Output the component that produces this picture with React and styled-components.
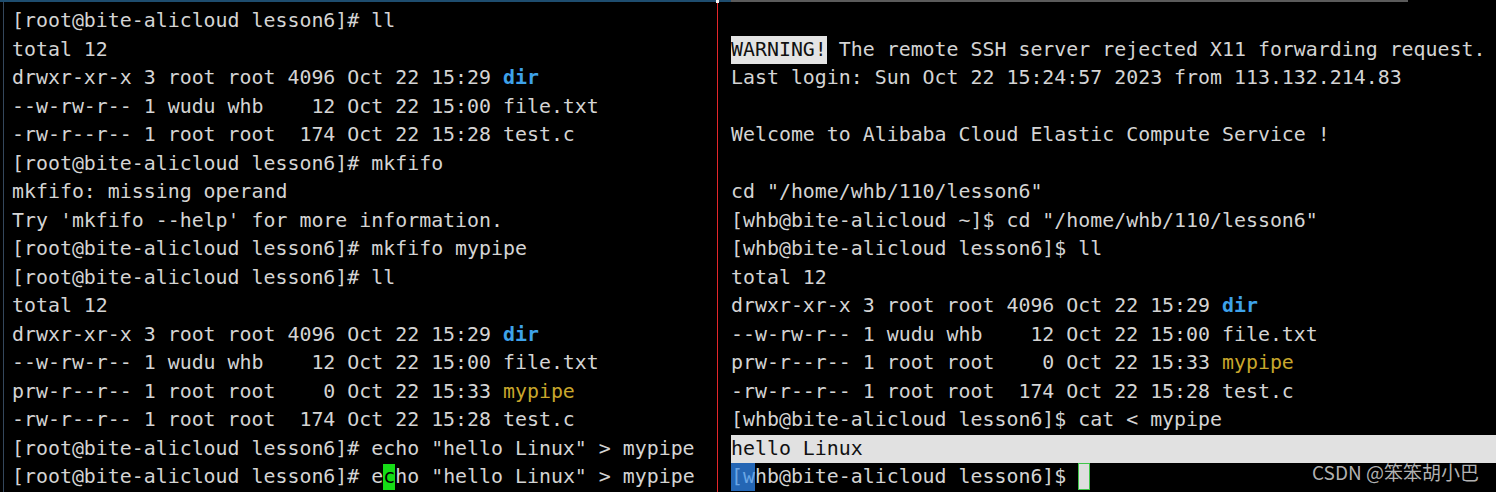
import React from "react";
import styled, { createGlobalStyle } from "styled-components";

const GlobalStyle = createGlobalStyle`
  html, body { margin: 0; padding: 0; background: #000; }
  body { overflow: hidden; }
  #root { width: 1496px; height: 492px; }
`;

const Screen = styled.div`
  position: relative;
  width: 1496px;
  height: 492px;
  background: #000;
  display: flex;
  flex-direction: column;
  overflow: hidden;
  font-family: "DejaVu Sans Mono", "Liberation Mono", monospace;
  font-size: 19.9px;
  color: #d4d4d4;
`;

const TopBar = styled.div`
  display: flex;
  height: 2px;
  flex: none;
`;

const TopSegment = styled.div`
  width: ${(p) => p.$w}px;
  background: ${(p) => p.$color};
`;

const Body = styled.div`
  flex: 1;
  display: flex;
  min-height: 0;
`;

const LeftPane = styled.div`
  width: 705px;
  margin-left: 3px;
  border-left: 1px solid #34475c;
  padding: 5px 0 0 8px;
  flex: none;
  overflow: hidden;
`;

const Divider = styled.div`
  position: relative;
  width: 1px;
  flex: none;
  background: #e3262a;
  &::before {
    content: "";
    position: absolute;
    top: -2px;
    left: -1px;
    width: 3px;
    height: 3px;
    background: #f4f4f4;
  }
`;

const RightPane = styled.div`
  flex: 1;
  padding: 5px 0 0 13px;
  overflow: hidden;
`;

const Line = styled.div`
  height: 28.5px;
  line-height: 28.5px;
  white-space: pre;
  background: ${(p) => (p.$hl ? "#e1e1e1" : "transparent")};
  color: ${(p) => (p.$hl ? "#111" : "inherit")};
`;

const Dir = styled.span`
  color: #3ea2ea;
  font-weight: bold;
`;

const Pipe = styled.span`
  color: #c9a72c;
`;

const Mark = styled.span`
  display: inline-block;
  height: 28px;
  vertical-align: top;
  background: #e4e4e4;
  color: #111;
`;

const SelectBlue = styled.span`
  display: inline-block;
  height: 28px;
  vertical-align: top;
  background: #2466b4;
  color: #6aa6e6;
`;

const GreenCursor = styled.span`
  display: inline-block;
  height: 26px;
  margin-top: 1px;
  vertical-align: top;
  line-height: 26px;
  background: #16dd16;
  color: #000;
`;

const BoxCursor = styled.span`
  display: inline-block;
  box-sizing: border-box;
  width: 12px;
  height: 27px;
  vertical-align: top;
  border: 1px solid #3fc44a;
  background: #dedede;
`;

const Watermark = styled.div`
  position: absolute;
  right: 17px;
  bottom: 9px;
  font-family: "Noto Sans CJK SC", "Noto Sans", sans-serif;
  font-size: 19px;
  line-height: 22px;
  color: rgba(210, 210, 210, 0.85);
  white-space: nowrap;
`;

const rootPrompt = "[root@bite-alicloud lesson6]# ";
const whbPrompt = "[whb@bite-alicloud lesson6]$ ";

export default function App() {
  return (
    <>
      <GlobalStyle />
      <Screen>
        <TopBar>
          <TopSegment $w={731} $color="#1e4d6f" />
          <TopSegment $w={677} $color="#5b5b5b" />
        </TopBar>
        <Body>
          <LeftPane>
            <Line>{rootPrompt}ll</Line>
            <Line>total 12</Line>
            <Line>drwxr-xr-x 3 root root 4096 Oct 22 15:29 <Dir>dir</Dir></Line>
            <Line>--w-rw-r-- 1 wudu whb    12 Oct 22 15:00 file.txt</Line>
            <Line>-rw-r--r-- 1 root root  174 Oct 22 15:28 test.c</Line>
            <Line>{rootPrompt}mkfifo</Line>
            <Line>mkfifo: missing operand</Line>
            <Line>Try 'mkfifo --help' for more information.</Line>
            <Line>{rootPrompt}mkfifo mypipe</Line>
            <Line>{rootPrompt}ll</Line>
            <Line>total 12</Line>
            <Line>drwxr-xr-x 3 root root 4096 Oct 22 15:29 <Dir>dir</Dir></Line>
            <Line>--w-rw-r-- 1 wudu whb    12 Oct 22 15:00 file.txt</Line>
            <Line>prw-r--r-- 1 root root    0 Oct 22 15:33 <Pipe>mypipe</Pipe></Line>
            <Line>-rw-r--r-- 1 root root  174 Oct 22 15:28 test.c</Line>
            <Line>{rootPrompt}echo "hello Linux" &gt; mypipe</Line>
            <Line>
              {rootPrompt}e<GreenCursor>c</GreenCursor>ho "hello Linux" &gt; mypipe
            </Line>
          </LeftPane>
          <Divider />
          <RightPane>
            <Line> </Line>
            <Line>
              <Mark>WARNING!</Mark> The remote SSH server rejected X11 forwarding request.
            </Line>
            <Line>Last login: Sun Oct 22 15:24:57 2023 from 113.132.214.83</Line>
            <Line> </Line>
            <Line>Welcome to Alibaba Cloud Elastic Compute Service !</Line>
            <Line> </Line>
            <Line>cd "/home/whb/110/lesson6"</Line>
            <Line>[whb@bite-alicloud ~]$ cd "/home/whb/110/lesson6"</Line>
            <Line>{whbPrompt}ll</Line>
            <Line>total 12</Line>
            <Line>drwxr-xr-x 3 root root 4096 Oct 22 15:29 <Dir>dir</Dir></Line>
            <Line>--w-rw-r-- 1 wudu whb    12 Oct 22 15:00 file.txt</Line>
            <Line>prw-r--r-- 1 root root    0 Oct 22 15:33 <Pipe>mypipe</Pipe></Line>
            <Line>-rw-r--r-- 1 root root  174 Oct 22 15:28 test.c</Line>
            <Line>{whbPrompt}cat &lt; mypipe</Line>
            <Line $hl>hello Linux</Line>
            <Line>
              <SelectBlue>[w</SelectBlue>hb@bite-alicloud lesson6]$ <BoxCursor />
            </Line>
          </RightPane>
        </Body>
        <Watermark>CSDN @笨笨胡小巴</Watermark>
      </Screen>
    </>
  );
}
